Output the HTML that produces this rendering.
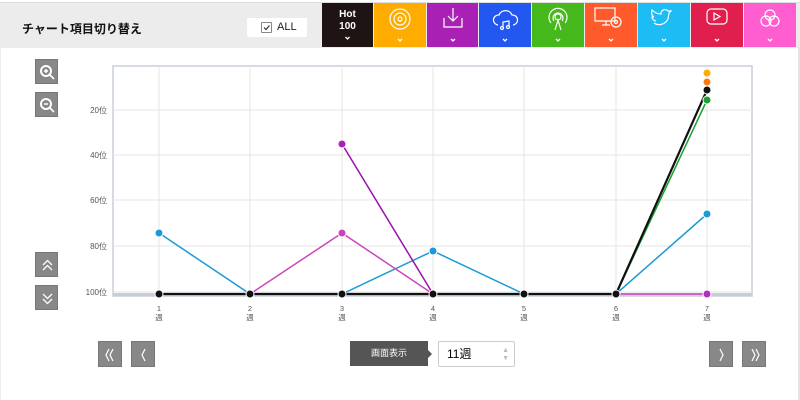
<!DOCTYPE html>
<html><head><meta charset="utf-8"><style>
body{margin:0;width:800px;height:400px;background:#fff;font-family:"Liberation Sans","Noto Sans CJK JP",sans-serif;position:relative;overflow:hidden}
.hdr{position:absolute;left:0;top:2px;width:800px;height:45px;background:#ececec;border-top:1px solid #ddd}
.ttl{position:absolute;left:22px;top:17px;font-size:12px;font-weight:bold;color:#111}
.all{position:absolute;left:247px;top:15px;width:60px;height:19px;background:#fff;border-radius:2px;font-size:11px;color:#222}
.all span{position:absolute;left:14px;top:4px;width:9px;height:9px;border:1px solid #888;border-radius:1px}
.all b{position:absolute;left:30px;top:3px;font-weight:normal}
.tile{position:absolute;top:3px;height:44px;width:51px}
.btn{position:absolute;width:23px;height:25px;background:#888;border:1px solid #777;box-sizing:border-box}
.btn svg{position:absolute;left:0;top:0}
.rb{position:absolute;right:0;top:47px;width:2px;height:353px;background:#e4e4e4}
.lb{position:absolute;left:0;top:47px;width:1px;height:353px;background:#eee}
</style></head><body>
<div class="hdr"><div class="ttl">チャート項目切り替え</div>
<div class="all"><span><svg width="9" height="9" style="position:absolute;left:0;top:0"><path d="M2 4.5l2 2 3.5-4" fill="none" stroke="#333" stroke-width="1.2"/></svg></span><b>ALL</b></div></div>
<div class="tile" style="left:322px;background:#1e1414;color:#fff;font-size:10px;font-weight:bold;text-align:center;line-height:12px"><div style="margin-top:6px">Hot<br>100</div><svg width="51" height="10" style="position:absolute;left:0;top:31px"><path d="M23.5 3l2 2 2-2" fill="none" stroke="#fff" stroke-width="1.3"/></svg></div>
<svg style="position:absolute;left:374px;top:3px" width="424" height="44" fill="none" stroke="#fff" stroke-width="1.2">
<rect x="0" y="0" width="52" height="44" fill="#ffac00" stroke="none"/>
<rect x="53" y="0" width="51" height="44" fill="#a821b4" stroke="none"/>
<rect x="105" y="0" width="52" height="44" fill="#2358f0" stroke="none"/>
<rect x="158" y="0" width="52" height="44" fill="#45b81c" stroke="none"/>
<rect x="211" y="0" width="52" height="44" fill="#ff5a2c" stroke="none"/>
<rect x="264" y="0" width="52" height="44" fill="#1ebcf5" stroke="none"/>
<rect x="317" y="0" width="52" height="44" fill="#e01f4e" stroke="none"/>
<rect x="370" y="0" width="52" height="44" fill="#ff5ed0" stroke="none"/>
<circle cx="26" cy="16" r="10"/><circle cx="26" cy="16" r="6"/><circle cx="26" cy="16" r="2"/>
<path d="M79 5v13M74 13l5 5 5-5M70 15v9h18v-9"/>
<path d="M124 22a5 5 0 0 1 1-10a7 7 0 0 1 13 0a5 5 0 0 1 1 10M129 25v-6l6-1v6"/><circle cx="128" cy="25" r="1.5"/><circle cx="134" cy="24" r="1.5"/>
<circle cx="184" cy="14" r="3"/><path d="M177 20a9 9 0 1 1 14 0M180 18a5 5 0 1 1 8 0M181 27l3-10 3 10"/>
<path d="M221 5h20v13h-20zM228 22h8M232 18v4"/><circle cx="242" cy="19" r="5"/><circle cx="242" cy="19" r="1.5"/>
<path d="M280 20c4 3 11 2 14-4l1-6 2-2-3 0a4 4 0 0 0-7 3c-4 0-7-2-9-4 -1 3 0 6 2 7h-2c0 2 2 4 4 4"/>
<rect x="333" y="6" width="20" height="15" rx="4"/><path d="M340 10v7l6-3.5z"/>
<circle cx="396" cy="12" r="5"/><circle cx="392" cy="18" r="5"/><circle cx="400" cy="18" r="5"/>
<g stroke-width="1.3"><path d="M24 36l2 2 2-2M77 36l2 2 2-2M129 36l2 2 2-2M182 36l2 2 2-2M235 36l2 2 2-2M288 36l2 2 2-2M341 36l2 2 2-2M394 36l2 2 2-2"/></g>
</svg>
<div class="lb"></div><div class="rb"></div>
<div class="btn" style="left:35px;top:59px"><svg width="23" height="25" fill="none" stroke="#fff" stroke-width="2"><circle cx="10" cy="11" r="5"/><path d="M14 15l4 4M8 11h4M10 9v4" stroke-width="1.6"/></svg></div>
<div class="btn" style="left:35px;top:92px"><svg width="23" height="25" fill="none" stroke="#fff" stroke-width="2"><circle cx="10" cy="11" r="5"/><path d="M14 15l4 4M8 11h4" stroke-width="1.6"/></svg></div>
<div class="btn" style="left:35px;top:252px"><svg width="23" height="25" fill="none" stroke="#fff" stroke-width="1.3"><path d="M7 12l4.5-4.5 4.5 4.5M7 17l4.5-4.5 4.5 4.5"/></svg></div>
<div class="btn" style="left:35px;top:285px"><svg width="23" height="25" fill="none" stroke="#fff" stroke-width="1.3"><path d="M7 8l4.5 4.5 4.5-4.5M7 13l4.5 4.5 4.5-4.5"/></svg></div>
<svg style="position:absolute;left:0;top:0" width="800" height="400" font-size="8" fill="#555">
<rect x="113" y="66" width="639" height="230" fill="none" stroke="#c8cdd8" stroke-width="1.5"/>
<g stroke="#e6e6e6"><path d="M113 110h639M113 155h639M113 200h639M113 246h639M113 292h639M159 66v230M250 66v230M342 66v230M433 66v230M524 66v230M616 66v230M707 66v230"/></g>
<rect x="113" y="293" width="639" height="3" fill="#c8cdd8"/>
<g text-anchor="end"><text x="107" y="113">20位</text><text x="107" y="158">40位</text><text x="107" y="203">60位</text><text x="107" y="249">80位</text><text x="107" y="295">100位</text></g>
<g text-anchor="middle" font-size="7.5"><text x="159" y="311">1</text><text x="159" y="320">週</text><text x="250" y="311">2</text><text x="250" y="320">週</text><text x="342" y="311">3</text><text x="342" y="320">週</text><text x="433" y="311">4</text><text x="433" y="320">週</text><text x="524" y="311">5</text><text x="524" y="320">週</text><text x="616" y="311">6</text><text x="616" y="320">週</text><text x="707" y="311">7</text><text x="707" y="320">週</text></g>
<g fill="none" stroke-width="1.5">
<polyline stroke="#1a9ad6" points="159,233 250,294 342,294 433,251 524,294 616,294 707,214"/>
<polyline stroke="#cc44bb" points="250,294 342,233 433,294 524,294 616,294 707,294"/>
<polyline stroke="#9911aa" points="342,144 433,294"/>
<polyline stroke="#18a030" points="616,294 707,100"/>
<polyline stroke="#111" stroke-width="2.2" points="159,294 250,294 342,294 433,294 524,294 616,294 707,90"/>
</g>
<g stroke="#fff" stroke-width="1">
<circle cx="159" cy="233" r="4" fill="#1a9ad6"/><circle cx="433" cy="251" r="4" fill="#1a9ad6"/><circle cx="707" cy="214" r="4" fill="#1a9ad6"/>
<circle cx="342" cy="233" r="4" fill="#cc44bb"/><circle cx="707" cy="294" r="4" fill="#b030c0"/>
<circle cx="342" cy="144" r="4" fill="#aa22bb"/>
<circle cx="707" cy="100" r="4" fill="#18a030"/>
<circle cx="707" cy="73" r="4" fill="#ffac00"/><circle cx="707" cy="82" r="4" fill="#ff7a10"/>
<g fill="#111"><circle cx="159" cy="294" r="4"/><circle cx="250" cy="294" r="4"/><circle cx="342" cy="294" r="4"/><circle cx="433" cy="294" r="4"/><circle cx="524" cy="294" r="4"/><circle cx="616" cy="294" r="4"/><circle cx="707" cy="90" r="4"/></g>
</g>
</svg>
<div class="btn" style="left:98px;top:341px;width:24px;height:26px"><svg width="24" height="26" fill="none" stroke="#fff" stroke-width="1.2"><path d="M10 7l-3 6 3 6M14 7l-3 6 3 6"/></svg></div>
<div class="btn" style="left:131px;top:341px;width:24px;height:26px"><svg width="24" height="26" fill="none" stroke="#fff" stroke-width="1.2"><path d="M13 7l-3 6 3 6"/></svg></div>
<div class="btn" style="left:709px;top:341px;width:24px;height:26px"><svg width="24" height="26" fill="none" stroke="#fff" stroke-width="1.2"><path d="M10 7l3 6-3 6"/></svg></div>
<div class="btn" style="left:742px;top:341px;width:24px;height:26px"><svg width="24" height="26" fill="none" stroke="#fff" stroke-width="1.2"><path d="M9 7l3 6-3 6M13 7l3 6-3 6"/></svg></div>
<div style="position:absolute;left:350px;top:341px;width:78px;height:25px;background:#555;color:#fff;font-size:9px;text-align:center;line-height:25px">画面表示</div>
<div style="position:absolute;left:428px;top:350px;width:0;height:0;border-left:4px solid #555;border-top:4px solid transparent;border-bottom:4px solid transparent"></div>
<div style="position:absolute;left:438px;top:341px;border:1px solid #ccc;border-radius:2px;font-size:12px;line-height:24px;padding-left:8px;box-sizing:border-box;width:77px;height:26px">11週<span style="position:absolute;right:5px;top:0;font-size:7px;color:#bbb;line-height:8px;padding-top:5px">▲<br>▼</span></div>
</body></html>
